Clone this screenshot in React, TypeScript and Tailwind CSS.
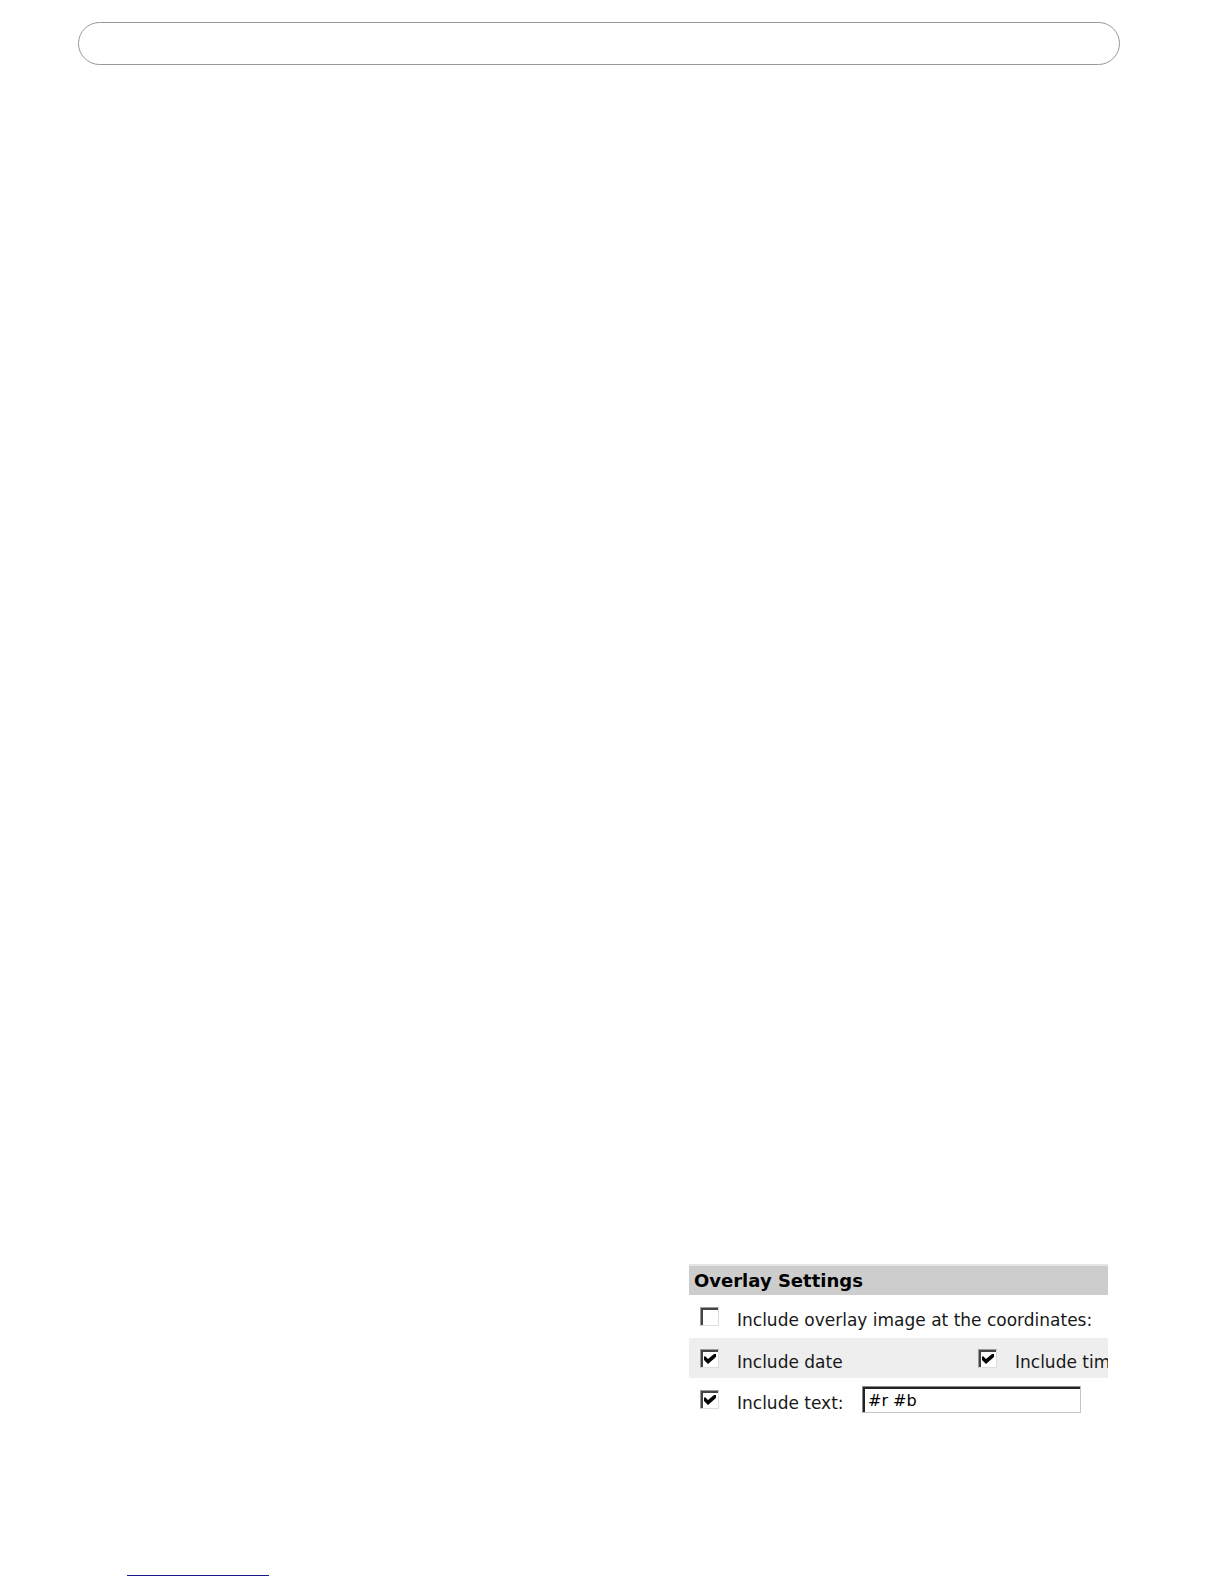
import type { ReactNode } from "react";

function Check({ id, checked, children }: { id: string; checked?: boolean; children: ReactNode }) {
  return (
    <div className="flex shrink-0 items-start">
      <span className="grid shrink-0">
        <input
          id={id}
          type="checkbox"
          defaultChecked={checked}
          className="peer col-start-1 row-start-1 size-[19px] appearance-none border border-t-[#999999] border-r-[#dedede] border-b-[#dedede] border-l-[#999999] bg-white shadow-[inset_2px_2px_0_#444444]"
        />
        <svg
          viewBox="0 0 19 19"
          className="pointer-events-none invisible col-start-1 row-start-1 size-[19px] peer-checked:visible"
          aria-hidden="true"
        >
          <path d="M4 8 L5 7 L8 10 L14 5 L16 5 V8 L8 15 L4 11 Z" fill="#050505" />
        </svg>
      </span>
      <label htmlFor={id} className="pt-[3px] pl-[18px] leading-5 whitespace-nowrap">
        {children}
      </label>
    </div>
  );
}

export default function App() {
  return (
    <main className="flex min-h-screen flex-col overflow-hidden bg-white pt-[22px] pb-2 font-['DejaVu_Sans',sans-serif] text-[17px] text-[#181818]">
      <header className="mr-[104px] ml-[78px] h-[43px] rounded-full border border-[#999999]" />

      <section className="mt-auto mr-[116px] mb-[162px] w-[419px] self-end overflow-hidden">
        <h2 className="border-t-2 border-[#e6e6e6] bg-[#cdcdcd] pt-[5px] pb-1 pl-[5px] text-lg leading-5 font-bold text-black">
          Overlay Settings
        </h2>
        <div className="flex h-[43px] pt-3 pl-[11px]">
          <Check id="overlay-image">Include overlay image at the coordinates:</Check>
        </div>
        <div className="flex h-10 bg-[#eeeeee] pt-[11px] pl-[11px]">
          <div className="w-[278px] shrink-0">
            <Check id="date" checked>
              Include date
            </Check>
          </div>
          <Check id="time" checked>
            Include time
          </Check>
        </div>
        <div className="flex pt-2 pl-[11px]">
          <div className="w-[162px] shrink-0 pt-1">
            <Check id="text" checked>
              Include text:
            </Check>
          </div>
          <input
            type="text"
            aria-label="Overlay text"
            defaultValue="#r #b"
            className="h-[27px] w-[219px] border border-t-[#888888] border-r-[#c4c4c4] border-b-[#c4c4c4] border-l-[#888888] bg-white px-[5px] pt-[2px] text-base text-black shadow-[inset_2px_2px_0_#222222] outline-none"
          />
        </div>
      </section>

      <hr className="ml-[127px] h-px w-[142px] border-0 bg-[#18188c]" />
    </main>
  );
}
